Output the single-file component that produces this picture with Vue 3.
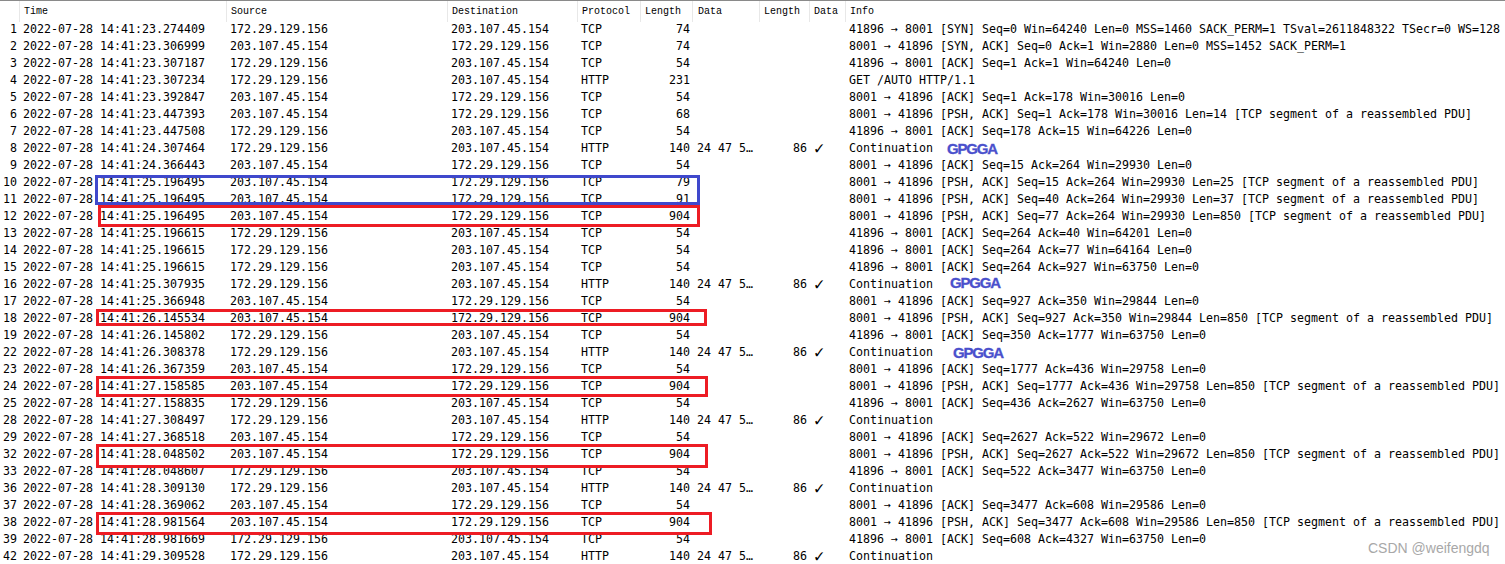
<script setup>
const push = (seq, ack, win, len) =>
  `8001 → 41896 [PSH, ACK] Seq=${seq} Ack=${ack} Win=${win} Len=${len} [TCP segment of a reassembled PDU]`
const ackS = (seq, ack, win) => `8001 → 41896 [ACK] Seq=${seq} Ack=${ack} Win=${win} Len=0`
const ackC = (seq, ack, win) => `41896 → 8001 [ACK] Seq=${seq} Ack=${ack} Win=${win} Len=0`
const C = '172.29.129.156'
const S = '203.107.45.154'
const cont = 'Continuation'
const raw = [
  [1, '23.274409', C, S, 'TCP', 74, '41896 → 8001 [SYN] Seq=0 Win=64240 Len=0 MSS=1460 SACK_PERM=1 TSval=2611848322 TSecr=0 WS=128'],
  [2, '23.306999', S, C, 'TCP', 74, '8001 → 41896 [SYN, ACK] Seq=0 Ack=1 Win=2880 Len=0 MSS=1452 SACK_PERM=1'],
  [3, '23.307187', C, S, 'TCP', 54, ackC(1, 1, 64240)],
  [4, '23.307234', C, S, 'HTTP', 231, 'GET /AUTO HTTP/1.1'],
  [5, '23.392847', S, C, 'TCP', 54, ackS(1, 178, 30016)],
  [6, '23.447393', S, C, 'TCP', 68, push(1, 178, 30016, 14)],
  [7, '23.447508', C, S, 'TCP', 54, ackC(178, 15, 64226)],
  [8, '24.307464', C, S, 'HTTP', 140, cont, true],
  [9, '24.366443', S, C, 'TCP', 54, ackS(15, 264, 29930)],
  [10, '25.196495', S, C, 'TCP', 79, push(15, 264, 29930, 25)],
  [11, '25.196495', S, C, 'TCP', 91, push(40, 264, 29930, 37)],
  [12, '25.196495', S, C, 'TCP', 904, push(77, 264, 29930, 850)],
  [13, '25.196615', C, S, 'TCP', 54, ackC(264, 40, 64201)],
  [14, '25.196615', C, S, 'TCP', 54, ackC(264, 77, 64164)],
  [15, '25.196615', C, S, 'TCP', 54, ackC(264, 927, 63750)],
  [16, '25.307935', C, S, 'HTTP', 140, cont, true],
  [17, '25.366948', S, C, 'TCP', 54, ackS(927, 350, 29844)],
  [18, '26.145534', S, C, 'TCP', 904, push(927, 350, 29844, 850)],
  [19, '26.145802', C, S, 'TCP', 54, ackC(350, 1777, 63750)],
  [22, '26.308378', C, S, 'HTTP', 140, cont, true],
  [23, '26.367359', S, C, 'TCP', 54, ackS(1777, 436, 29758)],
  [24, '27.158585', S, C, 'TCP', 904, push(1777, 436, 29758, 850)],
  [25, '27.158835', C, S, 'TCP', 54, ackC(436, 2627, 63750)],
  [28, '27.308497', C, S, 'HTTP', 140, cont, true],
  [29, '27.368518', S, C, 'TCP', 54, ackS(2627, 522, 29672)],
  [32, '28.048502', S, C, 'TCP', 904, push(2627, 522, 29672, 850)],
  [33, '28.048607', C, S, 'TCP', 54, ackC(522, 3477, 63750)],
  [36, '28.309130', C, S, 'HTTP', 140, cont, true],
  [37, '28.369062', S, C, 'TCP', 54, ackS(3477, 608, 29586)],
  [38, '28.981564', S, C, 'TCP', 904, push(3477, 608, 29586, 850)],
  [39, '28.981669', C, S, 'TCP', 54, ackC(608, 4327, 63750)],
  [42, '29.309528', C, S, 'HTTP', 140, cont, true],
]
const rows = raw.map(([no, t, src, dst, proto, len, info, gps]) => ({
  no,
  time: `2022-07-28 14:41:${t}`,
  src,
  dst,
  proto,
  len,
  info,
  gps: !!gps,
}))
const headers = ['', 'Time', 'Source', 'Destination', 'Protocol', 'Length', 'Data', 'Length', 'Data', 'Info']
const marks = [
  { c: 'blue', x: 95, y: 175, w: 605, h: 30 },
  { c: 'red', x: 98, y: 205, w: 602, h: 22 },
  { c: 'red', x: 96, y: 309, w: 611, h: 17 },
  { c: 'red', x: 96, y: 376, w: 612, h: 21 },
  { c: 'red', x: 96, y: 444, w: 612, h: 24 },
  { c: 'red', x: 96, y: 512, w: 616, h: 23 },
]
const labels = [
  { x: 947, y: 141 },
  { x: 950, y: 275 },
  { x: 953, y: 345 },
]
</script>

<template>
  <div class="capture">
    <div class="head">
      <div v-for="(h, i) in headers" :key="i" class="hcell">{{ h }}</div>
    </div>
    <div v-for="r in rows" :key="r.no" class="row">
      <div class="num">{{ r.no }}</div>
      <div class="cell">{{ r.time }}</div>
      <div class="cell">{{ r.src }}</div>
      <div class="cell">{{ r.dst }}</div>
      <div class="cell">{{ r.proto }}</div>
      <div class="len">{{ r.len }}</div>
      <div class="data">{{ r.gps ? '24 47 5…' : '' }}</div>
      <div class="len">{{ r.gps ? 86 : '' }}</div>
      <div class="check">{{ r.gps ? '✓' : '' }}</div>
      <div class="cell info">{{ r.info }}</div>
    </div>
    <div
      v-for="(m, i) in marks"
      :key="'m' + i"
      class="mark"
      :class="m.c"
      :style="{ left: m.x + 'px', top: m.y + 'px', width: m.w + 'px', height: m.h + 'px' }"
    ></div>
    <div
      v-for="(l, i) in labels"
      :key="'l' + i"
      class="gpgga"
      :style="{ left: l.x + 'px', top: l.y + 'px' }"
    >GPGGA</div>
    <div class="watermark">CSDN @weifengdq</div>
  </div>
</template>

<style>
html, body { margin: 0; background: #fff; overflow: hidden; }
</style>

<style scoped>
.capture {
  position: relative;
  width: 1505px;
  height: 564px;
  overflow: hidden;
  background: #fff;
  color: #000;
  font-family: "DejaVu Sans Mono", "Liberation Mono", monospace;
  font-size: 11.63px;
}
.head, .row {
  display: grid;
  grid-template-columns: 19px 207px 221px 130px 63px 52px 67px 50px 36px 660px;
}
.head {
  height: 20px;
  border-top: 1px solid #8a8a8a;
  font-family: "Liberation Mono", monospace;
  font-size: 10px;
  line-height: 21px;
}
.hcell {
  padding-left: 4px;
  border-left: 1px solid #e8e8e8;
  margin-bottom: 1px;
  box-sizing: border-box;
  white-space: nowrap;
}
.hcell:first-child { border-left: 0; }
.hcell:nth-child(7) { padding-left: 5px; }
.row {
  height: 17px;
  line-height: 17px;
  white-space: nowrap;
}
.num { text-align: right; padding-right: 2px; }
.cell { padding-left: 4px; }
.len { text-align: right; padding-right: 2px; }
.data { padding-left: 5px; }
.check {
  padding-left: 5px;
  font-size: 17px;
  font-weight: 700;
}
.info { overflow: visible; }
.mark {
  position: absolute;
  box-sizing: border-box;
  border: 3px solid;
}
.mark.red { border-color: #ed1c24; }
.mark.blue { border-color: #3f48cc; }
.gpgga {
  position: absolute;
  font-family: "Liberation Sans", sans-serif;
  font-weight: 700;
  font-size: 15px;
  letter-spacing: -1.2px;
  line-height: 16px;
  color: #4a50cc;
  -webkit-text-stroke: 0.3px #4a50cc;
}
.watermark {
  position: absolute;
  left: 1368px;
  top: 540px;
  font-family: "Liberation Sans", sans-serif;
  font-size: 14px;
  line-height: 16px;
  color: #a8a8a8;
}
</style>
